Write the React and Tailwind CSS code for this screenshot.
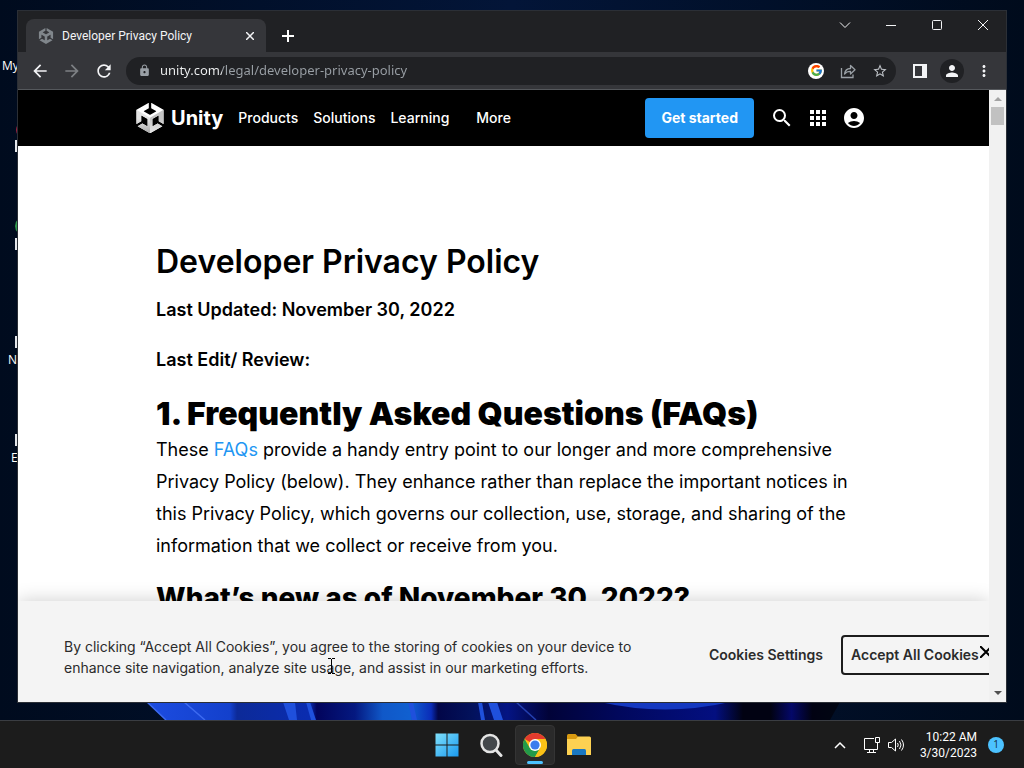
import React from 'react';
import { FcGoogle } from 'react-icons/fc';
import {
  MdAccountCircle,
  MdApps,
  MdArrowBack,
  MdArrowForward,
  MdLock,
  MdMoreVert,
  MdPerson,
  MdRefresh,
  MdSearch,
  MdStarBorder,
} from 'react-icons/md';

const UNITY_PATH =
  'm12.9288 4.2939 3.7997 2.1929c.1366.077.1415.2905 0 .3675l-4.515 2.6076a.4192.4192 0 0 1-.4246 0L7.274 6.8543c-.139-.0745-.1415-.293 0-.3675l3.7972-2.193V0L1.3758 5.5977V16.793l3.7177-2.1456v-4.3858c-.0025-.1565.1813-.2682.318-.1838l4.5148 2.6076a.4252.4252 0 0 1 .2136.3676v5.2127c.0025.1565-.1813.2682-.3179.1838l-3.7996-2.1929-3.7178 2.1457L12 24l9.6954-5.5977-3.7178-2.1457-3.7996 2.1929c-.1341.082-.3229-.0248-.3179-.1838V13.053c0-.1565.087-.2956.2136-.3676l4.5149-2.6076c.134-.082.3228.0224.3179.1838v4.3858l3.7177 2.1456V5.5977L12.9288 0Z';

const UnityCube = () => (
  <svg viewBox="1 0 22 24" className="h-8 w-7 shrink-0" aria-hidden="true">
    <defs>
      <clipPath id="cube">
        <path d={UNITY_PATH} />
      </clipPath>
      <linearGradient id="leftFace" x1="0" y1="0" x2="0" y2="1">
        <stop offset="0.4" stopColor="#e4e4e4" />
        <stop offset="1" stopColor="#a8a8a8" />
      </linearGradient>
      <linearGradient id="rightFace" x1="0" y1="0" x2="0" y2="1">
        <stop offset="0.4" stopColor="#c4c4c4" />
        <stop offset="1" stopColor="#e6e6e6" />
      </linearGradient>
    </defs>
    <g clipPath="url(#cube)">
      <path d="M0 0h24v24H0z" fill="#fff" />
      <path d="M0 4.8 12 11.8V24H0z" fill="url(#leftFace)" />
      <path d="M24 4.8 12 11.8V24h12z" fill="url(#rightFace)" />
    </g>
  </svg>
);

const TabStrip = () => (
  <div className="flex h-[41px] shrink-0 items-start bg-[#202124] pl-2">
    <div className="mt-2 flex h-[33px] w-60 items-center gap-2 rounded-t-lg bg-[#35363a] px-3">
      <svg viewBox="0 0 24 24" className="h-4 w-4 shrink-0" fill="#80868b">
        <path d={UNITY_PATH} />
      </svg>
      <span className="flex-1 truncate font-['Roboto',sans-serif] text-xs text-gray-100">Developer Privacy Policy</span>
      <button aria-label="Close tab" className="text-gray-100">
        <svg viewBox="0 0 8 8" className="h-2 w-2" stroke="currentColor" strokeWidth="1.5">
          <path d="M0 0l8 8M8 0L0 8" />
        </svg>
      </button>
    </div>
    <button aria-label="New tab" className="mt-[19px] ml-4 text-white">
      <svg viewBox="0 0 12 12" className="h-3 w-3" stroke="currentColor" strokeWidth="2">
        <path d="M6 0v12M0 6h12" />
      </svg>
    </button>
    <div className="ml-auto flex text-gray-100">
      <button aria-label="Search tabs" className="flex h-7 w-[46px] items-center justify-center">
        <svg viewBox="0 0 12 12" className="h-3 w-3" fill="none" stroke="currentColor">
          <path d="M1 3.5l5 5 5-5" />
        </svg>
      </button>
      <button aria-label="Minimize" className="flex h-7 w-[46px] items-center justify-center">
        <svg viewBox="0 0 10 10" className="h-[10px] w-[10px]" fill="none" stroke="currentColor">
          <path d="M0 5.5h10" />
        </svg>
      </button>
      <button aria-label="Maximize" className="flex h-7 w-[46px] items-center justify-center">
        <svg viewBox="0 0 10 10" className="h-[10px] w-[10px]" fill="none" stroke="currentColor">
          <rect x="0.5" y="0.5" width="9" height="9" rx="1" />
        </svg>
      </button>
      <button aria-label="Close" className="flex h-7 w-[46px] items-center justify-center">
        <svg viewBox="0 0 10 10" className="h-[10px] w-[10px]" fill="none" stroke="currentColor">
          <path d="M0 0l10 10M10 0L0 10" />
        </svg>
      </button>
    </div>
  </div>
);

const Toolbar = () => (
  <div className="flex h-[38px] shrink-0 items-center border-b border-[#55585c] bg-[#35363a] pr-[10px] pl-3 text-gray-100">
    <div className="flex gap-3">
      <button aria-label="Back"><MdArrowBack size={20} /></button>
      <button aria-label="Forward" className="text-[#7d8084]"><MdArrowForward size={20} /></button>
      <button aria-label="Reload"><MdRefresh size={20} /></button>
    </div>
    <div className="ml-3 flex h-7 flex-1 items-center gap-[9px] rounded-full bg-[#202124] pr-2 pl-3">
      <MdLock size={13} className="shrink-0 text-[#9aa0a6]" />
      <input
        aria-label="Address and search bar"
        readOnly
        value="unity.com/legal/developer-privacy-policy"
        className="min-w-0 flex-1 bg-[linear-gradient(90deg,#f1f3f4_62px,#9aa0a6_62px)] bg-clip-text font-['Noto_Sans',sans-serif] text-[13px] text-transparent outline-none"
      />
      <div className="flex items-center gap-4">
        <button aria-label="Search with Google" className="flex h-4 w-4 items-center justify-center rounded-full bg-white">
          <FcGoogle size={13} />
        </button>
        <button aria-label="Share" className="text-[#9aa0a6]">
          <svg viewBox="0 0 16 16" className="h-4 w-4" fill="none" stroke="currentColor" strokeWidth="1.3">
            <path d="M1.5 5v9.5H13V11.5" />
            <path d="M4.5 11c.5-3.5 2.5-5.5 6-5.5V2.5l4.500 4.200-4.500 4.300V8.300C7.800 8.300 6 9 4.500 11z" strokeLinejoin="round" />
          </svg>
        </button>
        <button aria-label="Bookmark this page" className="text-[#bdc1c6]"><MdStarBorder size={16} /></button>
      </div>
    </div>
    <div className="ml-3 flex items-center gap-2">
      <button aria-label="Side panel" className="flex h-6 w-6 items-center justify-center">
        <svg viewBox="0 0 14 14" className="h-[14px] w-[14px]">
          <path fillRule="evenodd" d="M0 0h14v14H0zM2 2v10h7V2z" fill="currentColor" />
        </svg>
      </button>
      <button aria-label="Profile" className="flex h-6 w-6 items-center justify-center rounded-full bg-[#202124]">
        <MdPerson size={18} />
      </button>
      <button aria-label="Menu" className="flex h-6 w-6 items-center justify-center"><MdMoreVert size={18} /></button>
    </div>
  </div>
);

const SiteHeader = () => (
  <header className="flex h-14 items-center bg-black pr-[123px] pl-[118px] text-sm font-medium text-white">
    <a href="#home" className="flex items-center gap-[7px]">
      <UnityCube />
      <span className="text-xl font-bold">Unity</span>
    </a>
    <nav className="ml-[15px] flex flex-1 gap-[15px]">
      <a href="#products">Products</a>
      <a href="#solutions">Solutions</a>
      <a href="#learning">Learning</a>
      <a href="#more" className="ml-3">More</a>
    </nav>
    <button className="h-10 rounded bg-[#2196f3] px-4 font-bold">Get started</button>
    <div className="ml-4 flex gap-3 text-white">
      <button aria-label="Search"><MdSearch size={24} /></button>
      <button aria-label="Apps"><MdApps size={24} /></button>
      <button aria-label="Account"><MdAccountCircle size={24} /></button>
    </div>
  </header>
);

const Article = () => (
  <main className="px-[138px] pt-24 text-lg leading-8 text-black">
    <h1 className="text-[32px] leading-10 font-semibold">Developer Privacy Policy</h1>
    <p className="mt-3 font-semibold">Last Updated: November 30, 2022</p>
    <p className="mt-[18px] font-semibold">Last Edit/ Review:</p>
    <h2 className="mt-[18px] text-[32px] leading-10 font-black">1. Frequently Asked Questions (FAQs)</h2>
    <p>
      These <a href="#faqs" className="text-[#2196f3]">FAQs</a> provide a handy entry point to our longer and more
      comprehensive Privacy Policy (below). They enhance rather than replace the important notices in this Privacy
      Policy, which governs our collection, use, storage, and sharing of the information that we collect or receive
      from you.
    </p>
    <h2 className="mt-4 text-[28px] leading-10 font-extrabold">What’s new as of November 30, 2022?</h2>
  </main>
);

const CookieBanner = () => (
  <section
    aria-label="Cookies"
    className="absolute inset-x-0 bottom-0 flex h-[101px] items-center overflow-hidden bg-[#f4f4f4] pt-1.5 pl-[46px] text-sm text-[#2b2b2b] shadow-[0_0_18px_rgba(0,0,0,0.2)]"
  >
    <p className="mt-1 w-[600px] shrink-0 leading-[21px]">
      By clicking “Accept All Cookies”, you agree to the storing of cookies on your device to enhance site
      navigation, analyze site usage, and assist in our marketing efforts.
    </p>
    <button className="ml-[45px] shrink-0 font-semibold">Cookies Settings</button>
    <button className="ml-[18px] h-10 w-[180px] shrink-0 rounded border-2 border-[#1c1c1c] pl-2 text-left font-semibold">
      Accept All Cookies
    </button>
    <button aria-label="Close" className="absolute top-[45px] -right-[3px] text-black">
      <svg viewBox="0 0 12 12" className="h-3 w-3" stroke="currentColor" strokeWidth="2">
        <path d="M0 0l12 12M12 0L0 12" />
      </svg>
    </button>
  </section>
);

const Scrollbar = () => (
  <div className="flex w-[17px] shrink-0 flex-col items-center bg-[#f1f1f1] py-[7px]">
    <svg viewBox="0 0 8 4" className="h-1 w-2" fill="#a3a3a3"><path d="M4 0l4 4H0z" /></svg>
    <div className="mt-1.5 h-[18px] w-[13px] bg-[#c1c1c1]" />
    <svg viewBox="0 0 8 4" className="mt-auto h-1 w-2" fill="#505050"><path d="M4 4l4-4H0z" /></svg>
  </div>
);

const BrowserWindow = () => (
  <div className="absolute inset-x-[18px] top-[11px] bottom-[18px] flex flex-col overflow-hidden bg-white font-['Open_Sans',sans-serif] outline outline-[#2b2f36]">
    <TabStrip />
    <Toolbar />
    <div className="flex min-h-0 flex-1">
      <div className="relative min-w-0 flex-1 overflow-hidden font-['Inter',sans-serif]">
        <SiteHeader />
        <Article />
        <CookieBanner />
      </div>
      <Scrollbar />
    </div>
  </div>
);

// only the strip below the window stays visible
const Wallpaper = () => (
  <svg viewBox="0 0 1024 18" preserveAspectRatio="none" className="absolute bottom-0 left-0 h-[18px] w-full" aria-hidden="true">
    <defs>
      <linearGradient id="bloom" gradientUnits="userSpaceOnUse" x1="147" x2="840" y1="0" y2="0">
        <stop offset="0" stopColor="#1c4ce0" />
        <stop offset="0.12" stopColor="#1340cc" />
        <stop offset="0.13" stopColor="#0c2a98" />
        <stop offset="0.235" stopColor="#0a2cb0" />
        <stop offset="0.245" stopColor="#02045c" />
        <stop offset="0.3" stopColor="#041880" />
        <stop offset="0.34" stopColor="#1058c8" />
        <stop offset="0.38" stopColor="#1060d0" />
        <stop offset="0.41" stopColor="#0a2cb8" />
        <stop offset="0.42" stopColor="#020648" />
        <stop offset="0.47" stopColor="#03125c" />
        <stop offset="0.52" stopColor="#041484" />
        <stop offset="0.58" stopColor="#010338" />
        <stop offset="0.68" stopColor="#01085c" />
        <stop offset="0.82" stopColor="#030f80" />
        <stop offset="0.86" stopColor="#010212" />
        <stop offset="0.9" stopColor="#010212" />
        <stop offset="0.93" stopColor="#040868" />
        <stop offset="0.96" stopColor="#010212" />
        <stop offset="1" stopColor="#010612" />
      </linearGradient>
    </defs>
    <path d="M147 0h693l-10 18H166z" fill="url(#bloom)" />
    <path d="M147 0l19 18M184 0l21 18" stroke="#3c6af0" strokeWidth="1.5" fill="none" />
    <path d="M283 0h12l2 18h-8zM306 0h4l6 18h-5zM408 0h5l4 18h-5zM478 0h4l3 18h-4zM488 0h9l6 18h-9z" fill="#1f50dc" />
    <path d="M516 0l20 18" stroke="#2440b0" strokeWidth="1.5" />
    <path d="M600 0q65 15 130 0z" fill="#1438c0" />
  </svg>
);

const Desktop = () => (
  <div className="relative min-h-0 flex-1 overflow-hidden bg-linear-to-r from-[#000b1e] via-[#031538] to-[#000b1c] font-['Open_Sans',sans-serif] text-xs text-white">
    <span className="absolute top-[58px] left-0.5">My</span>
    <span className="absolute top-[352px] left-2">N</span>
    <span className="absolute top-[450px] left-[11px]">E</span>
    <span className="absolute top-[122px] left-4 h-4 w-4 rounded-full bg-[#a02040]" />
    <span className="absolute top-[216px] left-[15px] h-5 w-5 rounded-full bg-[#2f9a4c]" />
    <span className="absolute top-[140px] left-[15px] h-3 w-3 bg-gray-200" />
    <span className="absolute top-[238px] left-[15px] h-3 w-3 bg-gray-200" />
    <span className="absolute top-[336px] left-[15px] h-3 w-3 bg-gray-200" />
    <span className="absolute top-[434px] left-[15px] h-3 w-3 bg-gray-200" />
    <Wallpaper />
    <BrowserWindow />
    {/* I-beam pointer */}
    <svg viewBox="0 0 7 16" className="absolute top-[658px] left-[328px] h-4 w-[7px]" fill="none" stroke="#000">
      <path d="M0 .5h3M4 .5h3M3.500 1v14M0 15.500h3M4 15.500h3" />
    </svg>
  </div>
);

const Taskbar = () => (
  <footer className="grid h-12 shrink-0 grid-cols-[1fr_auto_1fr] items-center border-t border-[#3a3d42] bg-[#1c1c1c] font-['Open_Sans',sans-serif] text-xs text-white">
    <div />
    <div className="flex gap-1 pl-0.5">
      <button aria-label="Start" className="flex h-10 w-10 items-center justify-center">
        <svg viewBox="0 0 24 24" className="h-6 w-6">
          <defs>
            <linearGradient id="start" x1="0" y1="0" x2="1" y2="1">
              <stop offset="0" stopColor="#7fe0fb" />
              <stop offset="1" stopColor="#1a9af0" />
            </linearGradient>
          </defs>
          <path d="M.5 .5h11v11H.5zM12.500 .5h11v11h-11zM.5 12.500h11v11H.5zM12.500 12.500h11v11h-11z" fill="url(#start)" />
        </svg>
      </button>
      <button aria-label="Search" className="flex h-10 w-10 items-center justify-center">
        <svg viewBox="0 0 24 24" className="h-6 w-6" fill="#43474b" stroke="#e4e4e4">
          <circle cx="11" cy="10.500" r="8.500" strokeWidth="2.500" />
          <path d="M17 17l5 5.500" strokeWidth="3" strokeLinecap="round" />
        </svg>
      </button>
      <button aria-label="Google Chrome" className="relative flex h-10 w-10 items-center justify-center rounded border border-[#343434] bg-[#2a2a2a]">
        <svg viewBox="0 0 24 24" className="h-6 w-6">
          <circle cx="12" cy="12" r="12" fill="#fbc116" />
          <path d="M12 12L1.600 6A12 12 0 0 1 22.400 6H12z" fill="#e33b2e" />
          <path d="M1.600 6A12 12 0 0 0 12 24l5.200-9L12 12 6.800 15z" fill="#229a4a" />
          <path d="M12 6h10.400A12 12 0 0 1 12 24l5.200-9z" fill="#fbc116" />
          <circle cx="12" cy="12" r="6" fill="#fff" />
          <circle cx="12" cy="12" r="4.600" fill="#3b7ded" />
        </svg>
        <span className="absolute bottom-0 h-[3px] w-4 rounded-full bg-[#4cc2ff]" />
      </button>
      <button aria-label="File Explorer" className="flex h-10 w-10 items-center justify-center">
        <svg viewBox="0 0 24 24" className="h-6 w-6">
          <path d="M0 2.500q0-1.500 1.500-1.500h7l2.500 2.500V8H0z" fill="#d99a10" />
          <path d="M0 6h9l2-2.500h11.500q1.500 0 1.500 1.500v17H0z" fill="#fdd152" />
          <path d="M5 22v-4.500q0-1.500 1.500-1.500h11q1.500 0 1.500 1.500V22z" fill="#1a78c2" />
        </svg>
      </button>
    </div>
    <div className="flex items-center justify-end pr-5">
      <button aria-label="Show hidden icons" className="mr-[18px]">
        <svg viewBox="0 0 12 8" className="h-2 w-3" fill="none" stroke="currentColor" strokeWidth="1.500">
          <path d="M1 7l5-5 5 5" />
        </svg>
      </button>
      <button aria-label="Network and volume" className="mr-4 flex gap-2">
        <svg viewBox="0 0 16 16" className="h-4 w-4" fill="none" stroke="currentColor">
          <path d="M10 1.500H.5v11h13V9M3 15.500h9M5.500 12.500v3M9.500 12.500v3M11.500 .5h4v5h-4zM13.500 5.500V9" />
        </svg>
        <svg viewBox="0 0 16 16" className="h-4 w-4" fill="none" stroke="currentColor">
          <path d="M.5 5.500h3L7.500 2v12l-4-3.500h-3zM9.500 6q1.500 2 0 4M11.500 4q3 4 0 8M13.500 2.500q4 5.500 0 11" />
        </svg>
      </button>
      <button className="text-right font-['Roboto',sans-serif] leading-4">
        10:22 AM
        <br />
        3/30/2023
      </button>
      <span className="ml-[11px] flex h-4 w-4 items-center justify-center rounded-full bg-[#4cc2ff] text-[10px] text-[#10303f]">1</span>
    </div>
  </footer>
);

const App = () => {
  return (
    <div className="flex h-screen flex-col overflow-hidden">
      <Desktop />
      <Taskbar />
    </div>
  );
};

export default App;
